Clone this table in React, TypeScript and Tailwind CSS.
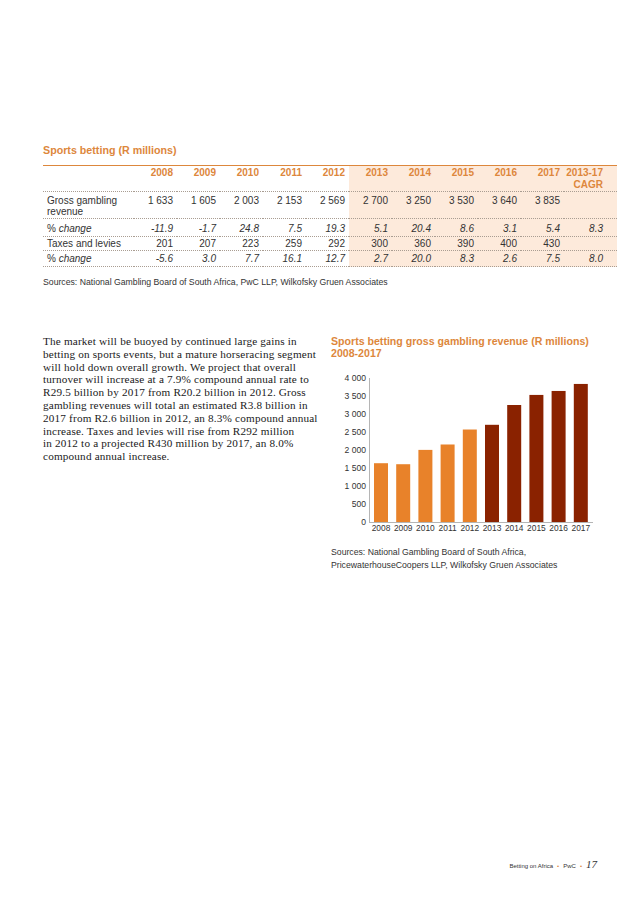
import React from "react";

const years = ["2008", "2009", "2010", "2011", "2012", "2013", "2014", "2015", "2016", "2017"];

type Row = { label: React.ReactNode; values: string[]; italic?: boolean; pad: string };

const rows: Row[] = [
  {
    label: (
      <>
        Gross gambling
        <br />
        revenue
      </>
    ),
    values: ["1 633", "1 605", "2 003", "2 153", "2 569", "2 700", "3 250", "3 530", "3 640", "3 835", ""],
    pad: "pt-[3px] pb-[1px]",
  },
  {
    label: "% change",
    values: ["-11.9", "-1.7", "24.8", "7.5", "19.3", "5.1", "20.4", "8.6", "3.1", "5.4", "8.3"],
    italic: true,
    pad: "pt-[4px] pb-[2px]",
  },
  {
    label: "Taxes and levies",
    values: ["201", "207", "223", "259", "292", "300", "360", "390", "400", "430", ""],
    pad: "pt-[1px] pb-[1px]",
  },
  {
    label: "% change",
    values: ["-5.6", "3.0", "7.7", "16.1", "12.7", "2.7", "20.0", "8.3", "2.6", "7.5", "8.0"],
    italic: true,
    pad: "pt-[2px] pb-[2px]",
  },
];

const revenue = [1633, 1605, 2003, 2153, 2569, 2700, 3250, 3530, 3640, 3835];

const bodyLines = [
  "The market will be buoyed by continued large gains in",
  "betting on sports events, but a mature horseracing segment",
  "will hold down overall growth. We project that overall",
  "turnover will increase at a 7.9% compound annual rate to",
  "R29.5 billion by 2017 from R20.2 billion in 2012. Gross",
  "gambling revenues will total an estimated R3.8 billion in",
  "2017 from R2.6 billion in 2012, an 8.3% compound annual",
  "increase. Taxes and levies will rise from R292 million",
  "in 2012 to a projected R430 million by 2017, an 8.0%",
  "compound annual increase.",
];

function Chart() {
  const y0 = 156;
  const k = 0.036;
  const ticks = [0, 500, 1000, 1500, 2000, 2500, 3000, 3500, 4000];
  const fmt = (v: number) => (v >= 1000 ? `${Math.floor(v / 1000)} ${String(v % 1000).padStart(3, "0")}` : String(v));
  return (
    <svg width={287} height={172} className="block" style={{ fontFamily: "'Liberation Sans', Arial, sans-serif" }}>
      {ticks.map((v) => (
        <text key={v} x={35} y={y0 - v * k + 3.2} fontSize={8.6} textAnchor="end" fill="#333">
          {fmt(v)}
        </text>
      ))}
      {revenue.map((v, i) => {
        const h = v * k;
        const x = 43 + i * 22.2;
        return <rect key={i} x={x} y={y0 - h} width={14} height={h} fill={i < 5 ? "#e8822a" : "#8a2200"} />;
      })}
      <line x1={38.5} y1={12} x2={38.5} y2={y0} stroke="#b5b5b5" strokeWidth={1} />
      <line x1={38} y1={y0 + 0.5} x2={262} y2={y0 + 0.5} stroke="#b5b5b5" strokeWidth={1} />
      {years.map((y, i) => (
        <text key={y} x={43 + i * 22.2 + 7} y={165} fontSize={8.4} textAnchor="middle" fill="#333">
          {y}
        </text>
      ))}
    </svg>
  );
}

export default function App() {
  return (
    <div className="w-[638px] h-[903px] bg-white flex flex-col font-['Liberation_Sans',Arial,sans-serif] text-[#333]">
      <div className="pt-[144px] pl-[43px] pr-[21px]">
        <div className="text-[10.7px] leading-[12px] font-bold text-[#dd873c] mb-[9px]">Sports betting (R millions)</div>

        <div className="grid grid-cols-[91px_repeat(10,43px)_53px] border-t border-[#dd873c] text-[10px]">
          <div className="border-b border-dotted border-[#a99d92]" />
          {years.map((y, i) => (
            <div
              key={y}
              className={`pt-[1px] pr-[4px] text-right font-bold leading-[12px] text-[#dd873c] border-b border-dotted border-[#a99d92] ${
                i >= 5 ? "bg-[#fdeadb]" : ""
              }`}
            >
              {y}
            </div>
          ))}
          <div className="pt-[1px] pr-[14px] text-right font-bold leading-[12px] text-[#dd873c] border-b border-dotted border-[#a99d92] bg-[#fdeadb]">
            2013-17
            <br />
            CAGR
          </div>

          {rows.map((r, ri) => (
            <React.Fragment key={ri}>
              <div className={`pl-[4px] leading-[11px] border-b border-dotted border-[#a99d92] ${r.pad}`}>
                {r.italic ? (
                  <>
                    % <span className="italic">change</span>
                  </>
                ) : (
                  r.label
                )}
              </div>
              {r.values.map((v, i) => (
                <div
                  key={i}
                  className={`text-right leading-[11px] border-b border-dotted border-[#a99d92] ${r.pad} ${
                    i === 10 ? "pr-[14px]" : "pr-[4px]"
                  } ${i >= 5 ? "bg-[#fdeadb]" : ""} ${r.italic ? "italic" : ""}`}
                >
                  {v}
                </div>
              ))}
            </React.Fragment>
          ))}
        </div>

        <div className="mt-[9px] text-[8.7px] leading-[12px] text-[#333]">
          Sources: National Gambling Board of South Africa, PwC LLP, Wilkofsky Gruen Associates
        </div>

        <div className="mt-[47px] flex">
          <div className="w-[288px] shrink-0 font-['Liberation_Serif','Times_New_Roman',serif] text-[11.2px] tracking-[0.18px] leading-[12.8px] text-[#1a1a1a]">
            {bodyLines.map((l, i) => (
              <div key={i} className="whitespace-nowrap">
                {l}
              </div>
            ))}
          </div>
          <div className="flex-1">
            <div className="text-[10.6px] leading-[12px] font-bold text-[#dd873c]">
              Sports betting gross gambling revenue (R millions)
              <br />
              2008-2017
            </div>
            <div className="mt-[7px]">
              <Chart />
            </div>
            <div className="mt-[8px] text-[8.7px] leading-[13px] text-[#333]">
              Sources: National Gambling Board of South Africa,
              <br />
              PricewaterhouseCoopers LLP, Wilkofsky Gruen Associates
            </div>
          </div>
        </div>
      </div>

      <div className="mt-auto pb-[32px] pr-[41px] flex justify-end items-baseline gap-[4px] text-[6px] leading-[10px] text-[#333]">
        <span>Betting on Africa</span>
        <span className="text-[#dd873c]">•</span>
        <span>PwC</span>
        <span className="text-[#dd873c]">•</span>
        <span className="font-['Liberation_Serif',serif] italic text-[11px]">17</span>
      </div>
    </div>
  );
}
